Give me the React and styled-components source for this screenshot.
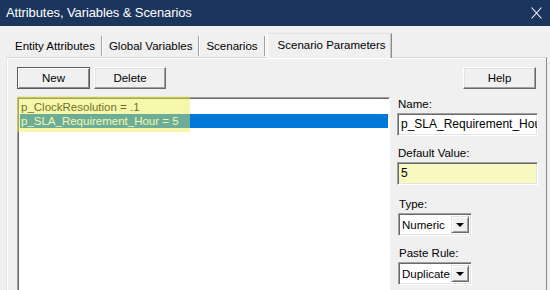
import styled, { createGlobalStyle } from "styled-components";

const GlobalStyle = createGlobalStyle`
    html, body {
        margin: 0;
        padding: 0;
        background: #f0f0f0;
        overflow: hidden;
    }
    body {
        font-family: "Liberation Sans", Arial, sans-serif;
        font-size: 11.5px;
        color: #000;
    }
`;

const Window = styled.div`
    width: 550px;
    height: 290px;
    background: #f0f0f0;
    overflow: hidden;
`;

const TitleBar = styled.div`
    height: 26px;
    background: #1b355d;
    color: #fff;
    display: flex;
    align-items: center;
    justify-content: space-between;
    padding: 0 8px 1px 6px;
    box-sizing: border-box;
`;

const Title = styled.span`
    font-size: 13px;
    letter-spacing: -0.1px;
`;

const Close = styled.svg`
    width: 11px;
    height: 12px;
    margin-top: 1px;
`;

const TabStrip = styled.div`
    display: flex;
    align-items: flex-end;
    height: 24px;
    margin: 7px 0 0 12px;
    position: relative;
    z-index: 1;
`;

const Tab = styled.div`
    height: 20px;
    line-height: 21px;
    padding: 0 6px 0 7px;
    border-right: 1px solid #a0a0a0;
    box-shadow: 1px 0 #fff;
    margin-bottom: 1px;
    white-space: nowrap;
    &:first-child {
        padding-left: 3px;
    }
`;

const ActiveTab = styled.div`
    height: 25px;
    line-height: 23px;
    padding: 0 5px 0 10px;
    margin-left: 2px;
    margin-bottom: -1px;
    background: #f0f0f0;
    border-top: 1px solid #e3e3e3;
    border-left: 1px solid #fff;
    border-right: 1px solid #8a8a8a;
    box-shadow: inset -1px 0 #c8c8c8;
    box-sizing: border-box;
    white-space: nowrap;
`;

const Panel = styled.div`
    margin-left: 6px;
    width: 541px;
    height: 240px;
    box-sizing: border-box;
    border: 1px solid;
    border-color: #d6d6d6 #8a8a8a #8a8a8a #e3e3e3;
    box-shadow: inset 1px 1px #fff;
    padding: 9px 8px 0 10px;
`;

const Toolbar = styled.div`
    display: flex;
    gap: 4px;
    height: 22px;
    margin-bottom: 8px;
`;

const Button = styled.div`
    width: ${(p) => p.w || 73}px;
    height: 22px;
    box-sizing: border-box;
    display: flex;
    align-items: center;
    justify-content: center;
    background: #f0f0f0;
    border: 1px solid;
    border-color: ${(p) => (p.primary ? "#5a5a5a" : "#fff #696969 #696969 #fff")};
    box-shadow: ${(p) =>
        p.primary
            ? "inset 1px 1px #fff, inset -1px -1px #8a8a8a, inset 2px 2px #e8e8e8"
            : "inset -1px -1px #a0a0a0, inset 1px 1px #e3e3e3"};
    margin-left: ${(p) => (p.right ? "auto" : "0")};
    margin-right: ${(p) => (p.right ? "2px" : "0")};
`;

const Content = styled.div`
    display: grid;
    grid-template-columns: 373px 141px;
    gap: 7px;
`;

const ListBox = styled.div`
    position: relative;
    height: 200px;
    background: #fff;
    border: 1px solid;
    border-color: #a0a0a0 #fff #fff #a0a0a0;
    box-shadow: inset 1px 1px #696969;
    padding: 2px 1px 0 2px;
    box-sizing: border-box;
`;

const Item = styled.div`
    height: 14px;
    line-height: 14px;
    padding-left: 1px;
    white-space: nowrap;
    background: ${(p) => (p.selected ? "#0078d7" : "transparent")};
    color: ${(p) => (p.selected ? "#fff" : "#000")};
`;

const Highlight = styled.div`
    position: absolute;
    left: -1px;
    top: -2px;
    width: 173px;
    height: 36px;
    background: rgba(238, 238, 70, 0.45);
    pointer-events: none;
`;

const Side = styled.div`
    display: flex;
    flex-direction: column;
`;

const Group = styled.div`
    margin-bottom: ${(p) => p.gap || 10}px;
    padding-left: ${(p) => p.indent || 0}px;
`;

const Label = styled.div`
    height: 15px;
    line-height: 15px;
    margin-bottom: 1px;
    padding-left: 1px;
`;

const TextBox = styled.div`
    height: 23px;
    box-sizing: border-box;
    border: 1px solid;
    border-color: #a0a0a0 #fff #fff #a0a0a0;
    box-shadow: inset 1px 1px #696969, inset -1px -1px #e3e3e3;
    background: ${(p) => p.bg || "#fff"};
    padding: 0 3px;
    line-height: 21px;
    font-size: 12px;
    white-space: nowrap;
    overflow: hidden;
`;

const Select = styled.div`
    width: 74px;
    height: 23px;
    box-sizing: border-box;
    border: 1px solid;
    border-color: #a0a0a0 #fff #fff #a0a0a0;
    box-shadow: inset 1px 1px #696969, inset -1px -1px #e3e3e3;
    background: #fff;
    display: flex;
    align-items: center;
    padding: 2px;
`;

const SelectText = styled.div`
    flex: 1;
    overflow: hidden;
    white-space: nowrap;
    padding-left: 1px;
`;

const DropButton = styled.div`
    width: 18px;
    height: 17px;
    flex-shrink: 0;
    box-sizing: border-box;
    background: #f0f0f0;
    border: 1px solid;
    border-color: #e3e3e3 #696969 #696969 #e3e3e3;
    box-shadow: inset 1px 1px #fff, inset -1px -1px #a0a0a0;
    display: flex;
    align-items: center;
    justify-content: center;
    &::after {
        content: "";
        border-left: 4px solid transparent;
        border-right: 4px solid transparent;
        border-top: 4px solid #000;
        margin-top: 1px;
    }
`;

const params = [
    { id: 1, text: "p_ClockResolution = .1" },
    { id: 2, text: "p_SLA_Requirement_Hour = 5", selected: true },
];

function Dropdown({ value }) {
    return (
        <Select>
            <SelectText>{value}</SelectText>
            <DropButton />
        </Select>
    );
}

function App() {
    return (
        <Window>
            <GlobalStyle />
            <TitleBar>
                <Title>Attributes, Variables &amp; Scenarios</Title>
                <Close viewBox="0 0 11 12">
                    <path d="M0.5 0.5 L10.5 11.5 M10.5 0.5 L0.5 11.5" stroke="#fff" strokeWidth="1.1" fill="none" />
                </Close>
            </TitleBar>
            <TabStrip>
                <Tab>Entity Attributes</Tab>
                <Tab>Global Variables</Tab>
                <Tab>Scenarios</Tab>
                <ActiveTab>Scenario Parameters</ActiveTab>
            </TabStrip>
            <Panel>
                <Toolbar>
                    <Button primary>New</Button>
                    <Button w={72}>Delete</Button>
                    <Button right>Help</Button>
                </Toolbar>
                <Content>
                    <ListBox>
                        {params.map((p) => (
                            <Item key={p.id} selected={p.selected}>
                                {p.text}
                            </Item>
                        ))}
                        <Highlight />
                    </ListBox>
                    <Side>
                        <Group>
                            <Label>Name:</Label>
                            <TextBox>p_SLA_Requirement_Hour</TextBox>
                        </Group>
                        <Group gap={12}>
                            <Label>Default Value:</Label>
                            <TextBox bg="#f8f8c0">5</TextBox>
                        </Group>
                        <Group indent={1}>
                            <Label>Type:</Label>
                            <Dropdown value="Numeric" />
                        </Group>
                        <Group indent={1}>
                            <Label>Paste Rule:</Label>
                            <Dropdown value="Duplicate" />
                        </Group>
                    </Side>
                </Content>
            </Panel>
        </Window>
    );
}

export default App;
